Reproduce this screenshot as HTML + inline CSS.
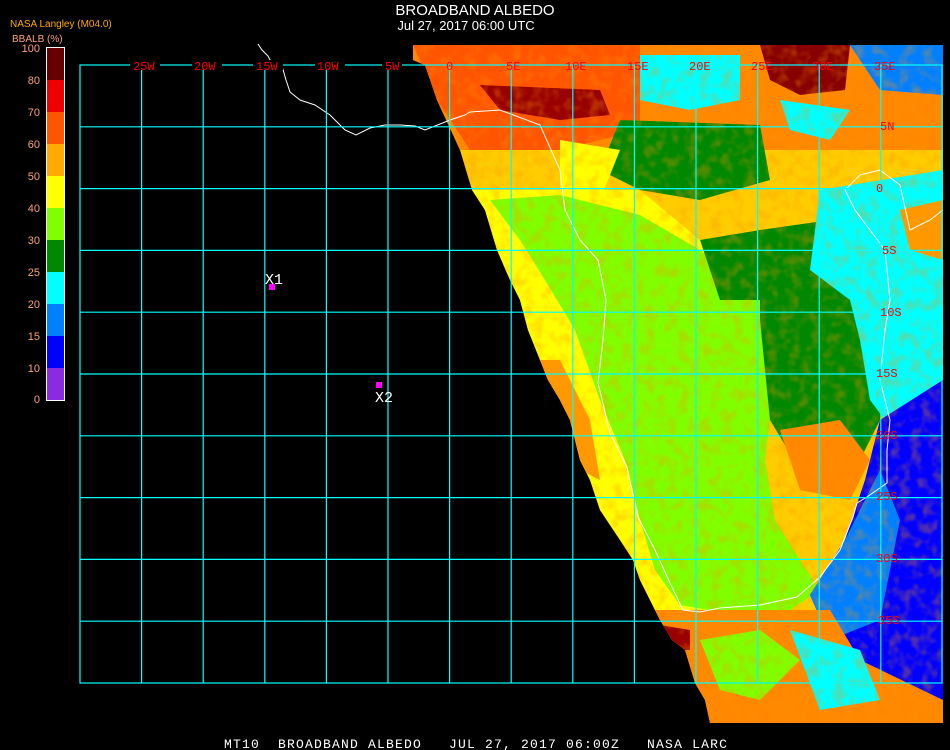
<!DOCTYPE html>
<html><head><meta charset="utf-8"><style>
html,body{margin:0;padding:0;background:#000;width:950px;height:750px;overflow:hidden}
svg{display:block}
text{font-family:"Liberation Sans",sans-serif}
.m{font-family:"Liberation Mono",monospace}
</style></head><body>
<svg width="950" height="750" viewBox="0 0 950 750">
<defs>
<clipPath id="d">
<polygon points="413,45 943,45 943,723 710,723 705,700 695,683 685,650 672,640 660,620 650,600 640,580 633,560 620,540 600,510 590,480 580,460 575,440 570,420 560,400 548,380 540,360 528,330 520,300 510,280 497,250 485,210 472,190 460,150 437,100 425,65 413,60"/>
</clipPath>
<filter id="n" x="0" y="0" width="100%" height="100%">
<feTurbulence type="fractalNoise" baseFrequency="0.09" numOctaves="2" seed="3"/>
<feColorMatrix type="matrix" values="0 0 0 0 1  0 0 0 0 0.3  0 0 0 0 0  3 0 0 0 -1.3"/>
</filter>
</defs>
<g clip-path="url(#d)">
<rect x="400" y="40" width="550" height="700" fill="#ffcc00"/>
<rect x="400" y="40" width="550" height="110" fill="#ff8800"/>
<polygon points="413,45 640,45 640,130 560,150 470,150 437,100" fill="#ff5500"/>
<polygon points="480,85 600,90 610,115 560,120 500,110" fill="#990000"/>
<polygon points="760,45 850,45 845,90 800,95 770,80" fill="#880000"/>
<polygon points="640,55 740,55 740,100 690,110 640,100" fill="#00ffff"/>
<polygon points="850,45 943,45 943,95 880,90" fill="#0080ff"/>
<polygon points="620,120 760,125 770,180 700,200 640,190 600,170" fill="#008800"/>
<polygon points="560,140 620,150 600,200 560,200" fill="#ffff00"/>
<polygon points="780,100 850,110 830,140 790,130" fill="#00ffff"/>
<polygon points="470,190 640,190 700,240 760,300 760,620 650,620 600,560 540,420 500,280" fill="#ffff00"/>
<polygon points="490,200 560,195 640,215 700,250 760,300 775,380 765,460 775,520 800,560 820,590 790,610 720,612 680,605 655,570 640,520 625,460 600,400 575,330 545,280 520,240" fill="#80ff00"/>
<polygon points="540,360 560,360 590,420 600,480 580,470 560,410" fill="#ff9900"/>
<polygon points="760,230 900,210 900,320 880,420 850,480 800,470 770,420 760,320" fill="#008800"/>
<polygon points="700,240 760,230 760,300 720,300" fill="#008800"/>
<polygon points="820,190 943,170 943,470 900,440 870,400 860,340 850,300 810,270" fill="#00ffff"/>
<polygon points="900,210 943,200 943,260 910,250" fill="#ff9900"/>
<polygon points="780,430 840,420 870,460 850,500 800,490" fill="#ff8800"/>
<polygon points="880,420 943,380 943,710 870,700 830,640 810,595 845,540 865,480" fill="#0000ff"/>
<polygon points="845,540 880,470 900,520 880,620 830,640 810,595" fill="#0080ff"/>
<polygon points="640,610 830,610 860,660 943,700 943,723 700,723 660,640" fill="#ff8800"/>
<polygon points="700,640 760,630 800,660 760,700 720,690" fill="#80ff00"/>
<polygon points="790,630 860,650 880,700 820,710" fill="#00ffff"/>
<polygon points="660,625 690,630 690,650 670,650" fill="#990000"/>
<rect x="400" y="40" width="550" height="700" filter="url(#n)" opacity="0.3"/>
</g>
<g fill="none" stroke="#fff" stroke-width="1">
<polyline points="258,44 262,50 268,56 270,60 282,66 286,80 290,92 300,100 315,105 330,115 345,130 356,135 370,128 385,125 400,125 415,126 425,130 435,126 450,120 465,115 470,112"/>
<polyline points="470,112 500,110 540,125 560,170 565,210 580,240 598,260 606,300 603,340 598,383 610,433 627,467 638,517 655,550 670,583 683,610 700,612 720,608 760,605 797,597 820,577 840,550 853,517 857,503 867,497 887,483 887,450 890,420 880,380 885,330 890,300 885,250 870,230 855,210 845,190"/>
<polyline points="845,190 860,175 880,170 900,185 910,230 930,220 943,210"/>
</g>
<g stroke="#00ffff" stroke-width="1.2" fill="none">
<rect x="80" y="65" width="862" height="618"/>
<path d="M141.6 65V683M203.2 65V683M264.8 65V683M326.4 65V683M388 65V683M449.6 65V683M511.2 65V683M572.8 65V683M634.4 65V683M696 65V683M757.6 65V683M819.2 65V683M880.8 65V683M80 126.8H942M80 188.6H942M80 250.4H942M80 312.2H942M80 374H942M80 435.8H942M80 497.6H942M80 559.4H942M80 621.2H942"/>
</g>
<g fill="#000">
<rect x="130" y="60" width="30" height="10"/><rect x="192" y="60" width="30" height="10"/><rect x="253" y="60" width="30" height="10"/><rect x="315" y="60" width="30" height="10"/><rect x="382" y="60" width="20" height="10"/>
</g>
<g fill="#ff0000" font-size="12" class="m">
<text x="133" y="70" class="m">25W</text><text x="194" y="70" class="m">20W</text><text x="256" y="70" class="m">15W</text><text x="317" y="70" class="m">10W</text><text x="385" y="70" class="m">5W</text><text x="446" y="70" class="m">0</text>
<text x="506" y="70" class="m">5E</text><text x="565" y="70" class="m">10E</text><text x="627" y="70" class="m">15E</text><text x="689" y="70" class="m">20E</text><text x="751" y="70" class="m">25E</text><text x="812" y="70" class="m">30E</text><text x="874" y="70" class="m">35E</text>
<text x="880" y="130" class="m">5N</text><text x="876" y="192" class="m">0</text><text x="882" y="254" class="m">5S</text><text x="880" y="316" class="m">10S</text><text x="876" y="377" class="m">15S</text><text x="876" y="439" class="m">20S</text><text x="876" y="500" class="m">25S</text><text x="876" y="562" class="m">30S</text><text x="878" y="624" class="m">35S</text>
</g>
<rect x="269" y="284" width="6" height="6" fill="#ff00ff"/>
<rect x="376" y="382" width="6" height="6" fill="#ff00ff"/>
<text x="265" y="284" fill="#fff" font-size="15" class="m">X1</text>
<text x="375" y="402" fill="#fff" font-size="15" class="m">X2</text>
<text x="475" y="15" fill="#fff" font-size="15" text-anchor="middle">BROADBAND ALBEDO</text>
<text x="466" y="30" fill="#fff" font-size="13" text-anchor="middle">Jul 27, 2017 06:00 UTC</text>
<text x="10" y="27" fill="#ffaa00" font-size="10">NASA Langley (M04.0)</text>
<text x="12" y="42" fill="#ffa07a" font-size="10">BBALB (%)</text>
<g>
<rect x="46" y="47" width="18" height="33" fill="#660000"/>
<rect x="46" y="80" width="18" height="32" fill="#ee0000"/>
<rect x="46" y="112" width="18" height="32" fill="#ff5500"/>
<rect x="46" y="144" width="18" height="32" fill="#ffaa00"/>
<rect x="46" y="176" width="18" height="32" fill="#ffff00"/>
<rect x="46" y="208" width="18" height="32" fill="#80ff00"/>
<rect x="46" y="240" width="18" height="32" fill="#008800"/>
<rect x="46" y="272" width="18" height="32" fill="#00ffff"/>
<rect x="46" y="304" width="18" height="32" fill="#0080ff"/>
<rect x="46" y="336" width="18" height="32" fill="#0000ff"/>
<rect x="46" y="368" width="18" height="32" fill="#8a2be2"/>
<rect x="46.5" y="47.5" width="18" height="353" fill="none" stroke="#fff" stroke-width="1"/>
</g>
<g fill="#ffa07a" font-size="11" text-anchor="end">
<text x="40" y="52">100</text><text x="40" y="84">80</text><text x="40" y="116">70</text><text x="40" y="148">60</text><text x="40" y="180">50</text><text x="40" y="212">40</text><text x="40" y="244">30</text><text x="40" y="276">25</text><text x="40" y="308">20</text><text x="40" y="340">15</text><text x="40" y="372">10</text><text x="40" y="403">0</text>
</g>
<text x="224" y="748" fill="#fff" font-size="13" class="m" style="white-space:pre" xml:space="preserve" letter-spacing="1.2">MT10  BROADBAND ALBEDO   JUL 27, 2017 06:00Z   NASA LARC</text>
</svg>
</body></html>
